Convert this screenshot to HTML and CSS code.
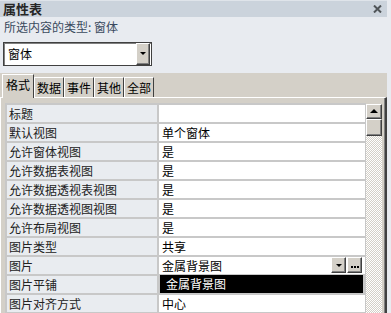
FILE: index.html
```html
<!DOCTYPE html>
<html lang="zh-CN">
<head>
  <meta charset="UTF-8" />
  <title>属性表</title>
  <link rel="stylesheet" href="styles.css">
</head>
<body>
  <div class="sheet">
    <div class="titlebar">
      <span class="title">属性表</span>
      <svg class="close" width="9" height="8" viewBox="0 0 9 8">
        <path d="M1 0.5 L8 7.5 M8 0.5 L1 7.5" stroke="#505559" stroke-width="2" />
      </svg>
    </div>
    <div class="desc">所选内容的类型: 窗体</div>

    <div class="combo">
      <span class="combo-text">窗体</span>
      <span class="btn drop-btn"><i class="arrow"></i></span>
    </div>

    <div class="tabs">
      <div class="tab active">格式</div>
      <div class="tab">数据</div>
      <div class="tab">事件</div>
      <div class="tab">其他</div>
      <div class="tab">全部</div>
    </div>

    <div class="panel">
      <div class="grid">
        <div class="label">标题</div><div class="value"></div>
        <div class="label">默认视图</div><div class="value">单个窗体</div>
        <div class="label">允许窗体视图</div><div class="value">是</div>
        <div class="label">允许数据表视图</div><div class="value">是</div>
        <div class="label">允许数据透视表视图</div><div class="value">是</div>
        <div class="label">允许数据透视图视图</div><div class="value">是</div>
        <div class="label">允许布局视图</div><div class="value">是</div>
        <div class="label">图片类型</div><div class="value">共享</div>
        <div class="label">图片</div>
        <div class="value editing">
          <span>金属背景图</span>
          <span class="btn cell-btn"><i class="arrow"></i></span>
          <span class="btn cell-btn"><i class="dots"></i></span>
        </div>
        <div class="label">图片平铺</div><div class="value picked">金属背景图</div>
        <div class="label">图片对齐方式</div><div class="value">中心</div>
      </div>

      <div class="scrollbar">
        <div class="btn sb-up"><i class="arrow up"></i></div>
        <div class="btn sb-thumb"></div>
        <div class="sb-track"></div>
      </div>
    </div>
  </div>
</body>
</html>
```

FILE: styles.css
```css
html, body {
  margin: 0;
  padding: 0;
  height: 100%;
  background: #e8ebf0;
  font-family: "Noto Sans CJK SC", "Noto Sans", sans-serif;
  font-size: 12px;
  color: #1e1e1e;
  overflow: hidden;
}

.sheet {
  width: 387px;
  height: 313px;
  display: flex;
  flex-direction: column;
}

/* title + description */

.titlebar {
  height: 17px;
  box-sizing: border-box;
  border-top: 1px solid #dfe4ea;
  background: #cbd3dc;
  display: flex;
  align-items: center;
  justify-content: space-between;
  padding: 0 5px 0 3px;
}

.title {
  font-size: 13px;
  font-weight: bold;
  line-height: 15px;
  color: #262626;
}

.desc {
  height: 19px;
  line-height: 19px;
  padding-left: 4px;
  color: #3a4a5e;
}

/* combo box */

.combo {
  margin: 6px 0 0 3px;
  width: 149px;
  height: 24px;
  box-sizing: border-box;
  border: 1px solid #404040;
  box-shadow: inset 1px 1px 0 #808080;
  background: #fff;
  display: flex;
  align-items: center;
  padding-right: 1px;
}

.combo-text {
  padding-left: 4px;
  color: #000;
}

.btn {
  box-sizing: border-box;
  background: #d4d0c8;
  border: 1px solid;
  border-color: #fff #404040 #404040 #fff;
  box-shadow: inset -1px -1px 0 #808080;
  display: flex;
  align-items: center;
  justify-content: center;
}

.drop-btn {
  margin-left: auto;
  width: 14px;
  height: 22px;
}

.arrow {
  width: 0;
  height: 0;
  border-left: 3px solid transparent;
  border-right: 3px solid transparent;
  border-top: 3px solid #000;
}

.arrow.up {
  border-top: none;
  border-bottom: 4px solid #000;
  border-left-width: 4px;
  border-right-width: 4px;
}

.dots {
  width: 2px;
  height: 2px;
  margin-right: 6px;
  margin-top: 3px;
  background: #000;
  box-shadow: 3px 0 0 #000, 6px 0 0 #000;
}

/* tabs */

.tabs {
  margin-top: 7px;
  height: 24px;
  background: #d4d0c8;
  display: flex;
  align-items: flex-end;
  padding-left: 2px;
}

.tab {
  height: 20px;
  line-height: 19px;
  padding: 0 2px;
  border-top: 1px solid #fff;
  border-left: 1px solid #fff;
  border-right: 1px solid #404040;
  box-sizing: border-box;
  color: #000;
}

.tab.active {
  height: 24px;
  margin-bottom: -1px;
  padding: 0 3px;
  line-height: 19px;
  background: #d4d0c8;
  position: relative;
  z-index: 1;
}

/* property grid */

.panel {
  flex-grow: 1;
  background: #d4d0c8;
  border-top: 1px solid #fff;
  border-left: 1px solid #fff;
  border-right: 2px solid #404040;
  box-shadow: inset -1px 0 0 #808080;
  padding: 5px 3px 0 4px;
  display: flex;
  align-items: flex-start;
  overflow: hidden;
}

.grid {
  width: 361px;
  box-sizing: border-box;
  background: #c8c8c8;
  display: grid;
  grid-template-columns: 150px 206px;
  grid-auto-rows: 17px;
  gap: 2px;
  padding: 2px 1px 2px 2px;
}

.label,
.value {
  line-height: 17px;
  white-space: nowrap;
  overflow: hidden;
}

.label {
  background: #e9ecf0;
  padding-left: 2px;
  color: #222;
}

.value {
  background: #fff;
  padding-left: 3px;
  color: #000;
}

.value.editing {
  display: flex;
  align-items: center;
  gap: 1px;
  padding-right: 3px;
}

.value.editing span:first-child {
  margin-right: auto;
}

.cell-btn {
  width: 15px;
  height: 16px;
}

.value.picked {
  background: #000;
  color: #fff;
  padding-left: 6px;
  margin: -1px 2px 0 1px;
}

/* scrollbar */

.scrollbar {
  width: 16px;
  margin-top: 1px;
  align-self: stretch;
  display: flex;
  flex-direction: column;
}

.sb-up {
  height: 15px;
}

.sb-thumb {
  height: 17px;
}

.sb-track {
  flex-grow: 1;
  background: repeating-conic-gradient(#d4d0c8 0 25%, #fff 0 50%) 0 0 / 2px 2px;
}
```
